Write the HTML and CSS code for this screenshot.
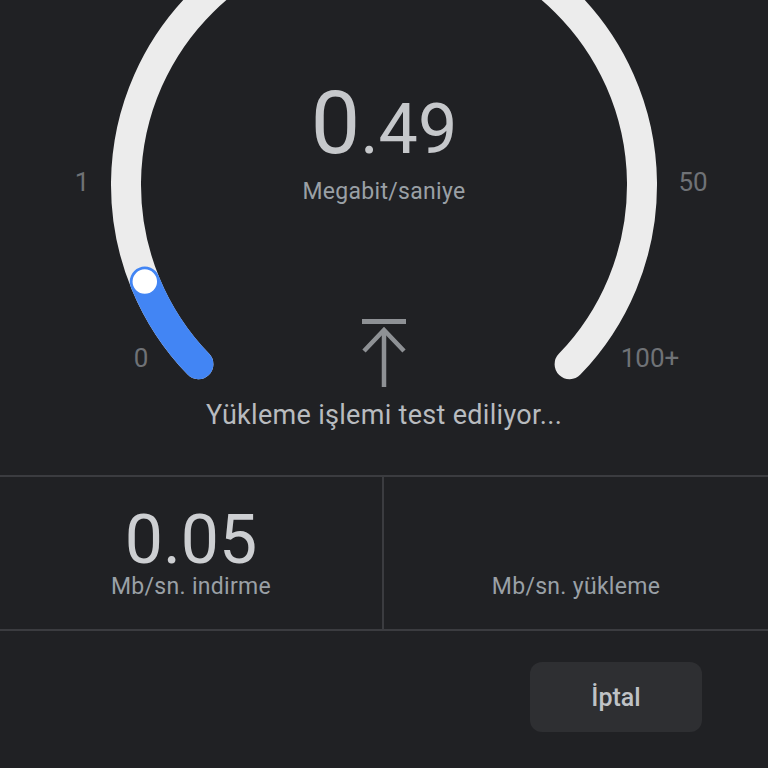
FILE: index.html
```html
<!DOCTYPE html>
<html lang="tr">
<head>
<meta charset="utf-8">
<title>Hız testi</title>
<link rel="stylesheet" href="styles.css">
</head>
<body>
<main class="screen">
  <section class="gauge">
    <svg class="dial" width="768" height="476" viewBox="0 0 768 476" aria-hidden="true">
      <path d="M 198.4 364.2 A 258 258 0 1 1 569.6 364.2" fill="none" stroke="#ececec" stroke-width="30" stroke-linecap="round"/>
      <path d="M 198.4 364.2 A 258 258 0 0 1 144.8 281.6" fill="none" stroke="#4285f4" stroke-width="30" stroke-linecap="round"/>
      <circle cx="144.8" cy="281.6" r="13" fill="#ffffff" stroke="#4285f4" stroke-width="1.5"/>
    </svg>
    <span class="tick tick-0">0</span>
    <span class="tick tick-1">1</span>
    <span class="tick tick-50">50</span>
    <span class="tick tick-100">100+</span>

    <div class="center">
      <div class="value"><span class="int">0</span><span class="frac">.49</span></div>
      <div class="unit">Megabit/saniye</div>
      <svg class="upload" width="48" height="70" viewBox="0 0 48 70" aria-hidden="true">
        <line x1="2" y1="3.5" x2="46" y2="3.5" stroke="#8e9195" stroke-width="5"/>
        <polyline points="4,33 24,12 44,33" fill="none" stroke="#8e9195" stroke-width="4.5"/>
        <line x1="24" y1="12" x2="24" y2="69" stroke="#8e9195" stroke-width="4.5"/>
      </svg>
      <div class="status">Yükleme işlemi test ediliyor...</div>
    </div>
  </section>

  <section class="results">
    <div class="cell cell-left">
      <div class="num">0.05</div>
      <div class="label">Mb/sn. indirme</div>
    </div>
    <div class="cell">
      <div class="num"></div>
      <div class="label">Mb/sn. yükleme</div>
    </div>
  </section>

  <footer class="actions">
    <button class="cancel" type="button">İptal</button>
  </footer>
</main>
</body>
</html>
```

FILE: styles.css
```css
html, body {
  margin: 0;
  padding: 0;
  background: #202124;
}

body {
  font-family: Roboto, "Noto Sans", "Liberation Sans", sans-serif;
  width: 768px;
  height: 768px;
  overflow: hidden;
}

.screen {
  display: flex;
  flex-direction: column;
}

.gauge {
  position: relative;
  height: 475px;
}

.dial {
  position: absolute;
  left: 0;
  top: 0;
}

.tick {
  position: absolute;
  font-size: 26px;
  line-height: 26px;
  color: #6f7276;
  transform: translate(-50%, -50%);
}

.tick-0 { left: 141px; top: 358px; }
.tick-1 { left: 82px; top: 182px; }
.tick-50 { left: 693px; top: 182px; }
.tick-100 { left: 650px; top: 358px; }

.center {
  position: relative;
  display: flex;
  flex-direction: column;
  align-items: center;
  padding-top: 79px;
}

.value {
  font-size: 88px;
  line-height: 88px;
  height: 88px;
  color: #c6c8cb;
  font-weight: 400;
  display: flex;
  align-items: baseline;
}

.value .int {
  font-size: 88px;
  line-height: 88px;
}

.value .frac {
  font-size: 70px;
  line-height: 70px;
}

.unit {
  margin-top: 12px;
  font-size: 23px;
  line-height: 26px;
  letter-spacing: 0.3px;
  color: #9aa0a6;
}

.upload {
  display: block;
  margin-top: 113px;
}

.status {
  margin-top: 12px;
  font-size: 27px;
  line-height: 30px;
  letter-spacing: 0.3px;
  color: #b8bbbf;
}

.results {
  display: grid;
  grid-template-columns: 1fr 1fr;
  border-top: 2px solid #3b3c40;
  border-bottom: 2px solid #3b3c40;
  height: 152px;
}

.cell {
  display: flex;
  flex-direction: column;
  align-items: center;
  padding-top: 30px;
}

.cell-left {
  border-right: 2px solid #3b3c40;
}

.num {
  font-size: 68px;
  line-height: 67px;
  height: 67px;
  color: #cdcfd2;
}

.label {
  font-size: 23px;
  line-height: 26px;
  letter-spacing: 0.3px;
  color: #9aa0a6;
}

.actions {
  display: flex;
  justify-content: flex-end;
  padding: 31px 66px 0 0;
}

.cancel {
  width: 172px;
  height: 70px;
  border: none;
  border-radius: 12px;
  background: #2e2f32;
  color: #bfc2c6;
  font-family: Roboto, "Noto Sans", "Liberation Sans", sans-serif;
  font-size: 25px;
  font-weight: 500;
  padding: 0;
}
```
